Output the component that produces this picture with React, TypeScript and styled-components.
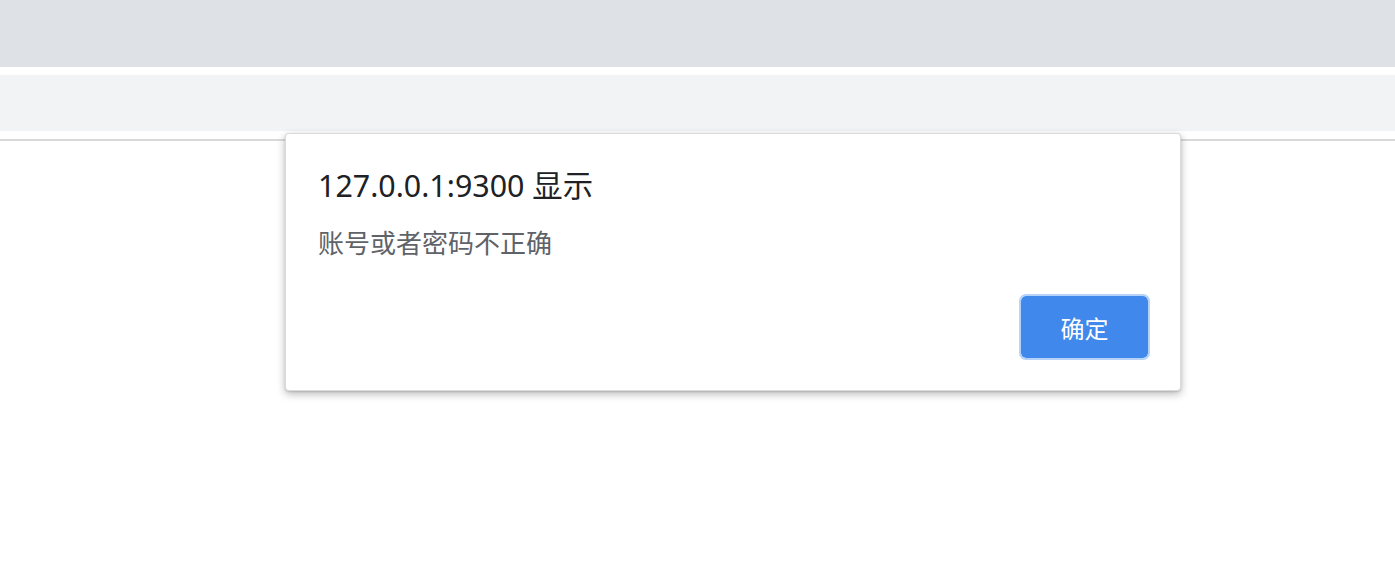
import React from 'react';
import styled, {createGlobalStyle} from "styled-components";

const GlobalStyle = createGlobalStyle`
  html, body {
    margin: 0;
    padding: 0;
    background: #ffffff;
    font-family: "Noto Sans", "Noto Sans CJK SC", sans-serif;
  }
`;

const Page = styled.div`
  position: relative;
  width: 100%;
  height: 573px;
  background: #ffffff;
  overflow: hidden;
`;

// browser chrome strips behind the alert
const TabStrip = styled.div`
  height: 67px;
  background: #dee1e6;
`;

const Toolbar = styled.div`
  height: 56px;
  margin-top: 8px;
  background: #f1f3f4;
`;

const Divider = styled.div`
  height: 2px;
  margin-top: 8px;
  background: #d9d9dc;
`;

const Dialog = styled.div`
  position: absolute;
  top: 133px;
  left: 285px;
  width: 896px;
  box-sizing: border-box;
  padding: 32px 30px 30px 32px;
  background: #ffffff;
  border: 1px solid rgba(0, 0, 0, 0.14);
  border-radius: 4px;
  box-shadow: 0 3px 8px rgba(0, 0, 0, 0.28), 0 1px 2px rgba(0, 0, 0, 0.12);
  display: flex;
  flex-direction: column;
`;

const Title = styled.div`
  font-size: 30.4px;
  line-height: 40px;
  color: #202124;
`;

const Message = styled.div`
  margin-top: 19px;
  font-size: 26px;
  line-height: 36px;
  color: #5f6368;
`;

const Actions = styled.div`
  display: flex;
  justify-content: flex-end;
  margin-top: 33px;
`;

const OkButton = styled.button`
  width: 131px;
  height: 66px;
  box-sizing: border-box;
  border: 2px solid #b6d2f8;
  border-radius: 7px;
  background: #4088eb;
  background-clip: padding-box;
  color: #ffffff;
  font-family: "Noto Sans", "Noto Sans CJK SC", sans-serif;
  font-size: 24px;
  cursor: pointer;
  padding: 0;
`;

export default function App() {
    return (
        <Page>
            <GlobalStyle/>
            <TabStrip/>
            <Toolbar/>
            <Divider/>
            <Dialog>
                <Title>127.0.0.1:9300 显示</Title>
                <Message>账号或者密码不正确</Message>
                <Actions>
                    <OkButton>确定</OkButton>
                </Actions>
            </Dialog>
        </Page>
    );
}
